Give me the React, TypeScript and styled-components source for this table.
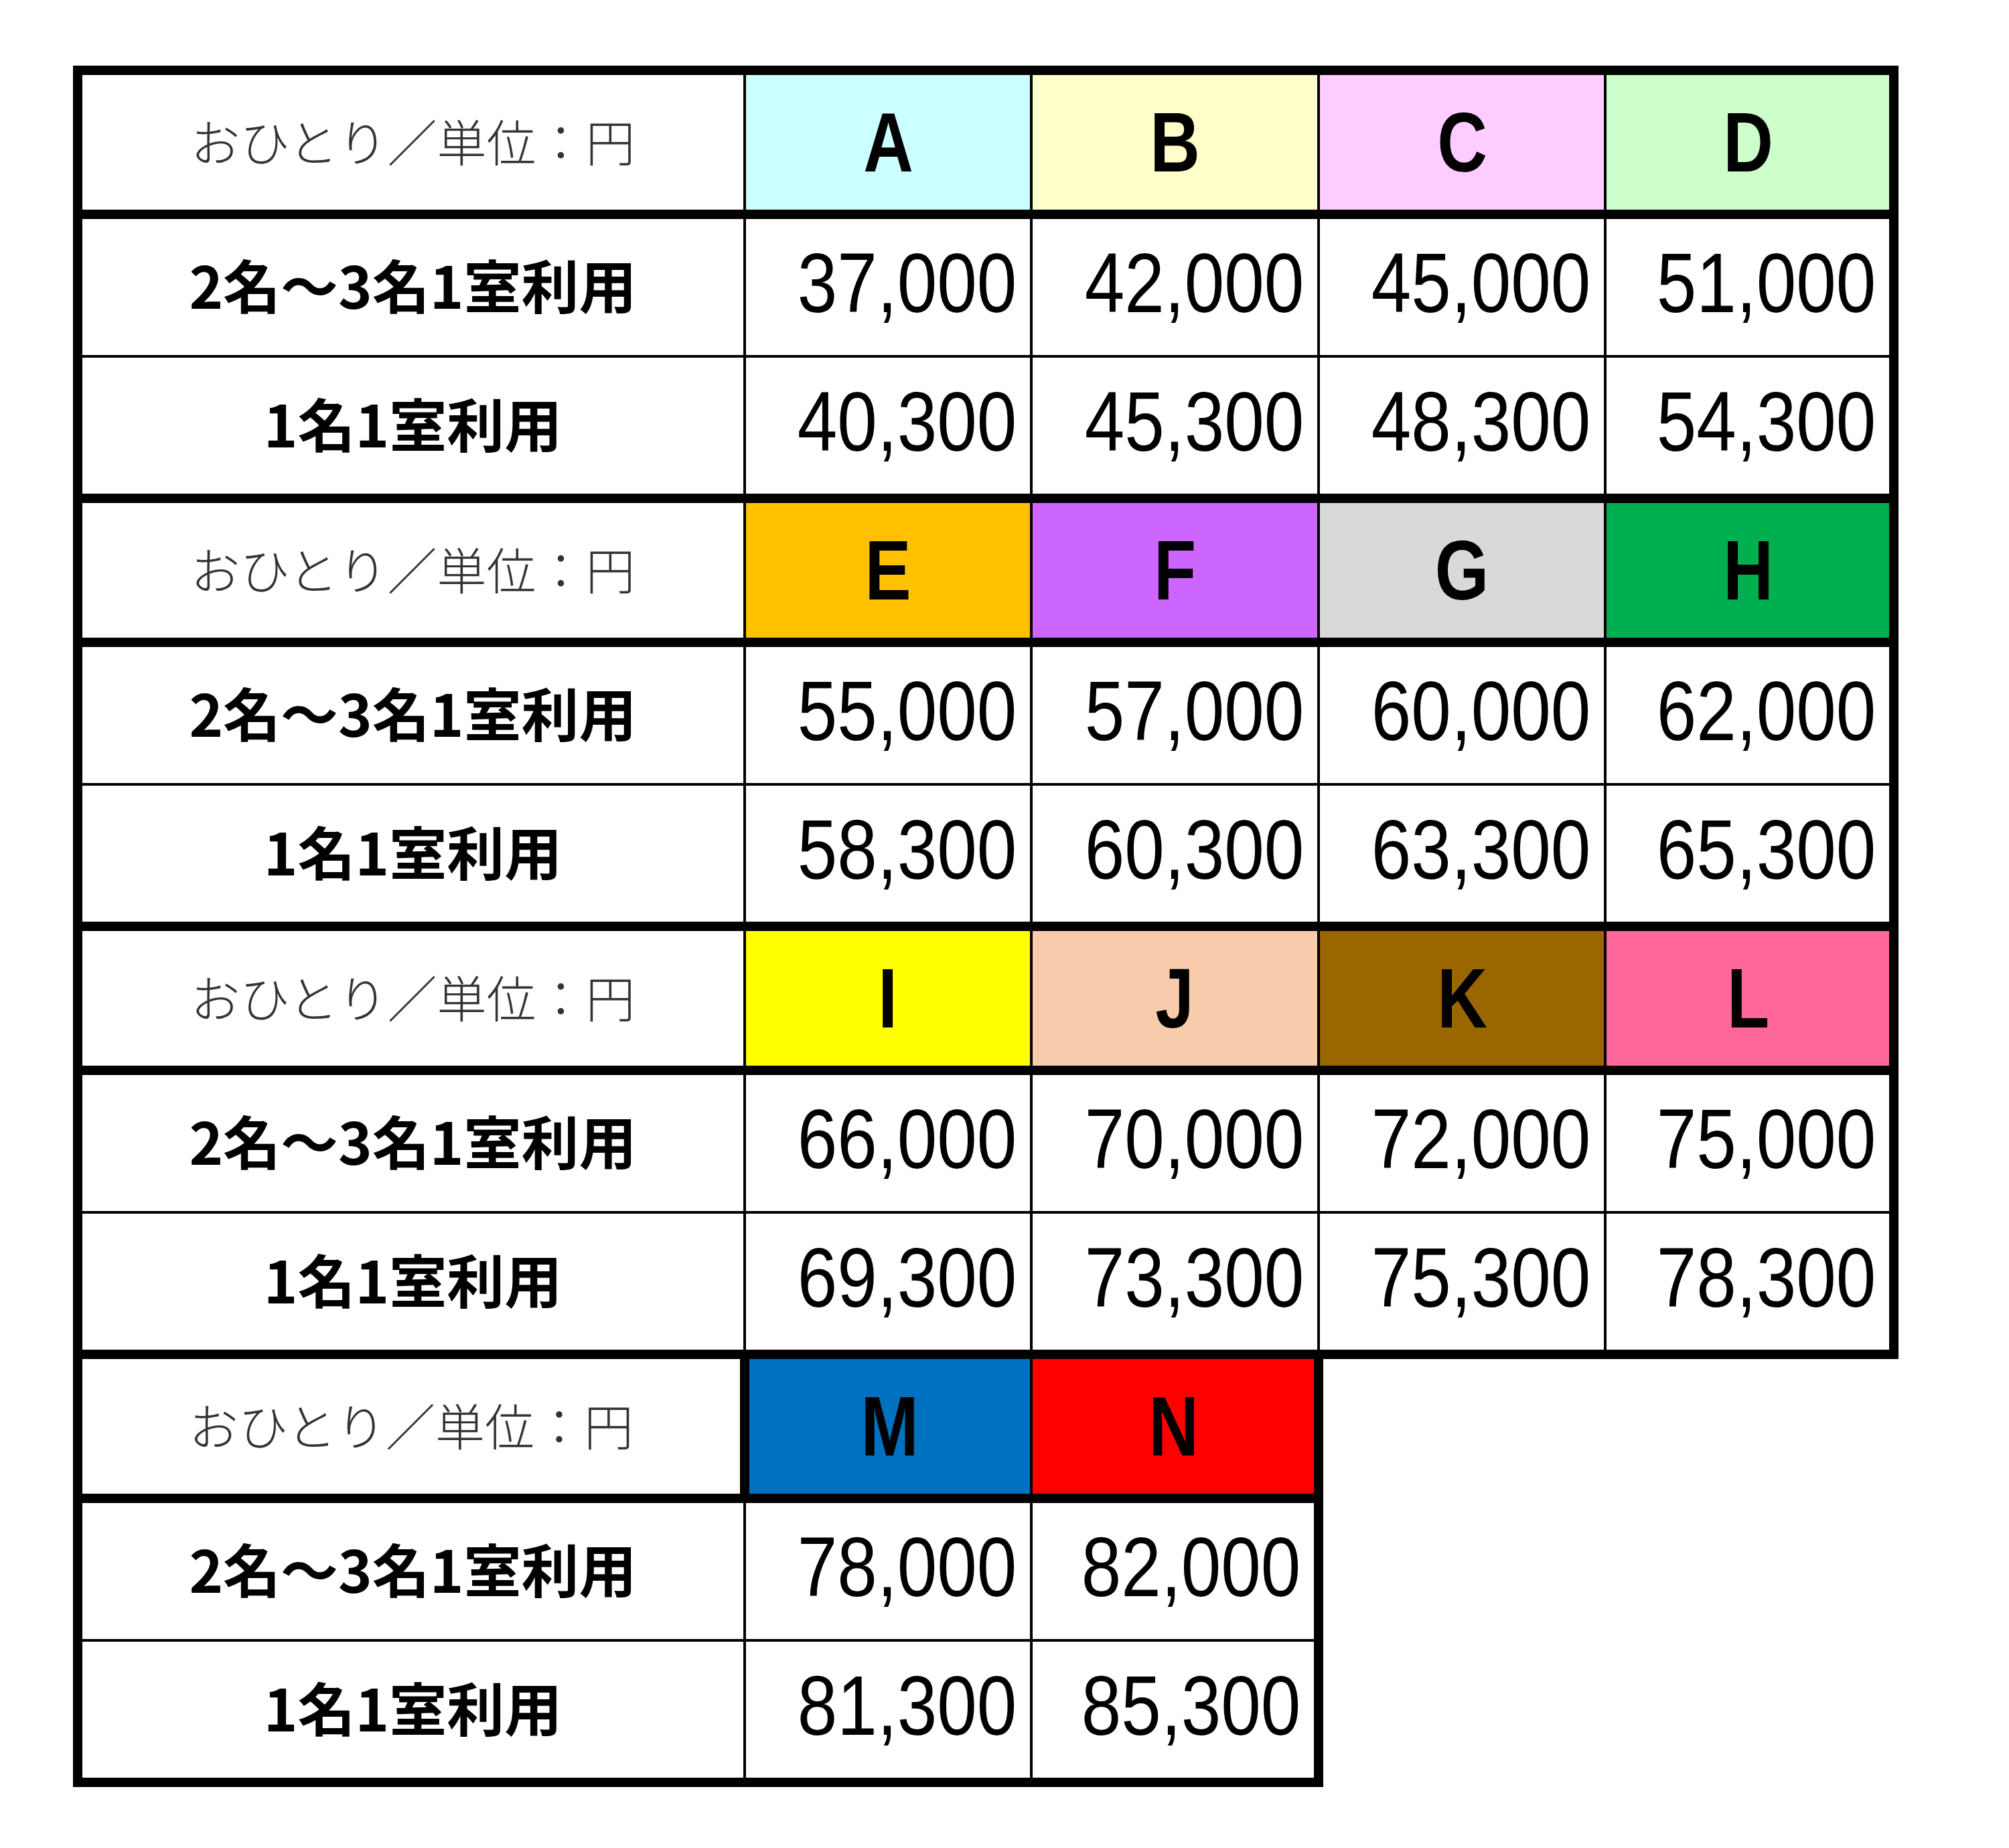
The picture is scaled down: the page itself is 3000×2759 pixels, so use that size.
import React from "react";
import styled, { createGlobalStyle } from "styled-components";

const Global = createGlobalStyle`
  html, body { margin: 0; padding: 0; background: #ffffff; }
  body { font-family: "Noto Sans CJK JP", "Liberation Sans", sans-serif; }
`;

const THICK = "14px solid #000";
const THIN = "4px solid #000";

const Page = styled.div`
  width: 3000px;
  height: 2759px;
  box-sizing: border-box;
  padding: 98px 0 0 109px;
  background: #fff;
`;

const Sheet = styled.table`
  border-collapse: collapse;
  table-layout: fixed;
  border-spacing: 0;
`;

const Col = styled.col<{ $w: number }>`
  width: ${(p) => p.$w}px;
`;

const Row = styled.tr<{ $h: number }>`
  height: ${(p) => p.$h}px;
`;

const BaseCell = styled.td`
  padding: 0;
  border: ${THIN};
  vertical-align: middle;
  line-height: 1;
  white-space: nowrap;
  overflow: hidden;
`;

const UnitCell = styled(BaseCell)`
  border-left: ${THICK};
  border-top: ${THICK};
  border-bottom: ${THICK};
  text-align: center;
  font-family: "Noto Sans CJK JP", sans-serif;
  font-weight: 300;
  font-size: 74px;
  color: #333333;
  padding-bottom: 8px;
`;

const LetterCell = styled(BaseCell)<{ $bg: string; $left?: boolean; $right?: boolean }>`
  background: ${(p) => p.$bg};
  border-top: ${THICK};
  border-bottom: ${THICK};
  ${(p) => (p.$left ? `border-left: ${THICK};` : "")}
  ${(p) => (p.$right ? `border-right: ${THICK};` : "")}
  text-align: center;
  font-family: "Liberation Sans", sans-serif;
  font-weight: 700;
  font-size: 126px;
  color: #000;
`;

const LabelCell = styled(BaseCell)<{ $last?: boolean }>`
  border-left: ${THICK};
  ${(p) => (p.$last ? `border-bottom: ${THICK};` : "")}
  text-align: center;
  font-family: "Noto Sans CJK JP", sans-serif;
  font-weight: 700;
  font-size: 86px;
  color: #000;
  padding-bottom: 10px;
`;

const PriceCell = styled(BaseCell)<{ $last?: boolean; $right?: boolean }>`
  ${(p) => (p.$last ? `border-bottom: ${THICK};` : "")}
  ${(p) => (p.$right ? `border-right: ${THICK};` : "")}
  text-align: right;
  padding-right: 20px;
  padding-bottom: 12px;
  font-family: "Liberation Sans", sans-serif;
  font-weight: 400;
  font-size: 126px;
  color: #000;
`;

const Narrow = styled.span<{ $origin: "center" | "right"; $scale: number }>`
  display: inline-block;
  transform: scaleX(${(p) => p.$scale});
  transform-origin: ${(p) => p.$origin} center;
`;

const EmptyCell = styled.td`
  padding: 0;
  border: none;
  background: transparent;
`;

type Plan = { letter: string; bg: string; pair: string; single: string };

const groups: Plan[][] = [
  [
    { letter: "A", bg: "#CCFFFF", pair: "37,000", single: "40,300" },
    { letter: "B", bg: "#FFFFCC", pair: "42,000", single: "45,300" },
    { letter: "C", bg: "#FFCCFF", pair: "45,000", single: "48,300" },
    { letter: "D", bg: "#CCFFCC", pair: "51,000", single: "54,300" },
  ],
  [
    { letter: "E", bg: "#FFC000", pair: "55,000", single: "58,300" },
    { letter: "F", bg: "#CC66FF", pair: "57,000", single: "60,300" },
    { letter: "G", bg: "#D9D9D9", pair: "60,000", single: "63,300" },
    { letter: "H", bg: "#00B050", pair: "62,000", single: "65,300" },
  ],
  [
    { letter: "I", bg: "#FFFF00", pair: "66,000", single: "69,300" },
    { letter: "J", bg: "#F8CBAD", pair: "70,000", single: "73,300" },
    { letter: "K", bg: "#996600", pair: "72,000", single: "75,300" },
    { letter: "L", bg: "#FF6699", pair: "75,000", single: "78,300" },
  ],
  [
    { letter: "M", bg: "#0070C0", pair: "78,000", single: "81,300" },
    { letter: "N", bg: "#FF0000", pair: "82,000", single: "85,300" },
  ],
];

const TOTAL_COLS = 4;

function Group({ plans }: { plans: Plan[] }) {
  const partial = plans.length < TOTAL_COLS;
  const blanks = Array.from({ length: TOTAL_COLS - plans.length });
  return (
    <>
      <Row $h={215}>
        <UnitCell>おひとり／単位：円</UnitCell>
        {plans.map((p, i) => (
          <LetterCell
            key={p.letter}
            $bg={p.bg}
            $left={partial && i === 0}
            $right={i === plans.length - 1}
          >
            <Narrow $origin="center" $scale={0.82}>{p.letter}</Narrow>
          </LetterCell>
        ))}
        {blanks.map((_, i) => (
          <EmptyCell key={i} />
        ))}
      </Row>
      <Row $h={212}>
        <LabelCell>2名～3名1室利用</LabelCell>
        {plans.map((p, i) => (
          <PriceCell key={p.letter} $right={i === plans.length - 1}>
            <Narrow $origin="right" $scale={0.85}>{p.pair}</Narrow>
          </PriceCell>
        ))}
        {blanks.map((_, i) => (
          <EmptyCell key={i} />
        ))}
      </Row>
      <Row $h={212}>
        <LabelCell $last>1名1室利用</LabelCell>
        {plans.map((p, i) => (
          <PriceCell key={p.letter} $last $right={i === plans.length - 1}>
            <Narrow $origin="right" $scale={0.85}>{p.single}</Narrow>
          </PriceCell>
        ))}
        {blanks.map((_, i) => (
          <EmptyCell key={i} />
        ))}
      </Row>
    </>
  );
}

export default function App() {
  return (
    <Page>
      <Global />
      <Sheet>
        <colgroup>
          <Col $w={996} />
          <Col $w={428} />
          <Col $w={429} />
          <Col $w={428} />
          <Col $w={431} />
        </colgroup>
        <tbody>
          {groups.map((g, i) => (
            <Group key={i} plans={g} />
          ))}
        </tbody>
      </Sheet>
    </Page>
  );
}
